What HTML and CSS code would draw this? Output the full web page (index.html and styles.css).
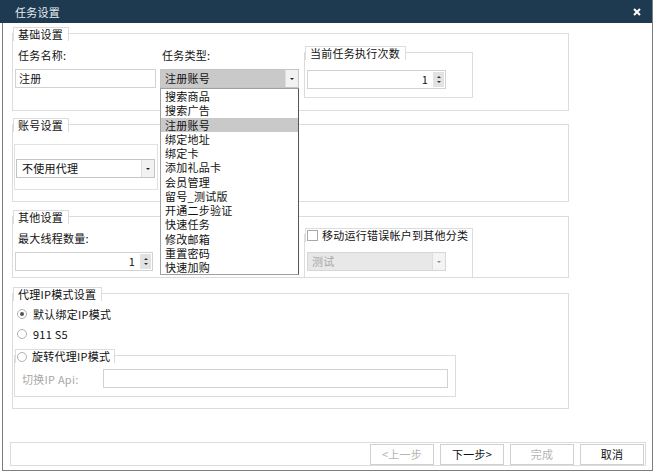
FILE: index.html
```html
<!DOCTYPE html>
<html lang="zh-CN">
<head>
    <meta charset="UTF-8">
    <title>任务设置</title>
    <link rel="stylesheet" href="styles.css">
</head>
<body>
    <div class="window">
        <div class="titlebar">
            <span class="title">任务设置</span>
            <svg class="close" width="8" height="8" viewBox="0 0 8 8"><path d="M1 1L7 7M7 1L1 7" stroke="#fff" stroke-width="2"/></svg>
        </div>

        <div class="content">
            <!-- 基础设置 -->
            <div class="group g-basic">
                <div class="group-title">基础设置</div>
                <div class="row">
                    <div class="field">
                        <div class="label">任务名称:</div>
                        <div class="textbox">注册</div>
                    </div>
                    <div class="field field-type">
                        <div class="label">任务类型:</div>
                        <div class="combo open">
                            <span class="combo-text">注册账号</span>
                            <span class="combo-btn"></span>
                            <ul class="droplist">
                                <li>搜索商品</li>
                                <li>搜索广告</li>
                                <li class="sel">注册账号</li>
                                <li>绑定地址</li>
                                <li>绑定卡</li>
                                <li>添加礼品卡</li>
                                <li>会员管理</li>
                                <li>留号_测试版</li>
                                <li>开通二步验证</li>
                                <li>快速任务</li>
                                <li>修改邮箱</li>
                                <li>重置密码</li>
                                <li>快速加购</li>
                            </ul>
                        </div>
                    </div>
                    <div class="sub sub-count">
                        <div class="group-title">当前任务执行次数</div>
                        <div class="numeric num-count">
                            <span class="num-val">1</span>
                            <span class="spin"><i class="up"></i><i class="down"></i></span>
                        </div>
                    </div>
                </div>
            </div>

            <!-- 账号设置 -->
            <div class="group g-account">
                <div class="group-title">账号设置</div>
                <div class="inner-box">
                    <div class="combo combo-proxy">
                        <span class="combo-text">不使用代理</span>
                        <span class="combo-btn"></span>
                    </div>
                </div>
            </div>

            <!-- 其他设置 -->
            <div class="group g-other">
                <div class="group-title">其他设置</div>
                <div class="row">
                    <div class="field field-threads">
                        <div class="label">最大线程数量:</div>
                        <div class="numeric">
                            <span class="num-val">1</span>
                            <span class="spin"><i class="up"></i><i class="down"></i></span>
                        </div>
                    </div>
                    <div class="sub sub-move">
                        <div class="group-title check-title"><span class="checkbox"></span>移动运行错误帐户到其他分类</div>
                        <div class="combo disabled">
                            <span class="combo-text">测试</span>
                            <span class="combo-btn"></span>
                        </div>
                    </div>
                </div>
            </div>

            <!-- 代理IP模式设置 -->
            <div class="group g-proxy">
                <div class="group-title">代理IP模式设置</div>
                <div class="radio-row"><span class="radio on"></span>默认绑定IP模式</div>
                <div class="radio-row"><span class="radio"></span>911 S5</div>
                <div class="sub sub-rotate">
                    <div class="group-title check-title"><span class="radio"></span>旋转代理IP模式</div>
                    <div class="api-row">
                        <span class="api-label">切换IP Api:</span>
                        <div class="textbox api-input"></div>
                    </div>
                </div>
            </div>

            <div class="footer">
                <button class="btn" disabled>&lt;上一步</button>
                <button class="btn">下一步&gt;</button>
                <button class="btn" disabled>完成</button>
                <button class="btn">取消</button>
            </div>
        </div>
    </div>
</body>
</html>
```

FILE: styles.css
```css
* {
    box-sizing: border-box;
}

body {
    margin: 0;
    background: #fff;
    font-family: "Noto Sans CJK SC", "Noto Sans", sans-serif;
    font-size: 11px;
    letter-spacing: 0.25px;
    color: #111;
}

.window {
    margin-left: 2px;
    width: 651px;
    height: 471px;
    border: 1px solid #7d7d7d;
    border-top: 0;
}

.titlebar {
    height: 23px;
    margin-left: -3px;
    background: #1d3a51;
    color: #e4ebf0;
    display: flex;
    align-items: center;
    justify-content: space-between;
    padding: 0 11px 0 15px;
}

.content {
    padding-left: 7px;
}

/* group boxes */
.group, .sub {
    border: 1px solid #dcdcdc;
}

.group {
    margin-left: 2px;
    width: 557px;
}

.group-title {
    width: max-content;
    margin-top: -7px;
    border: 1px solid #dcdcdc;
    border-bottom: 0;
    background: #fff;
    line-height: 13px;
    padding: 0 5px 0 4px;
}

.g-basic { margin-top: 10px; height: 78px; }
.g-account { margin-top: 13px; height: 78px; }
.g-other { margin-top: 14px; height: 62px; }
.g-proxy { margin-top: 15px; height: 116px; }

.row {
    display: flex;
    align-items: flex-start;
}

.field {
    margin-left: 2px;
    width: 141px;
}

.field-type {
    margin-left: 4px;
    width: 139px;
}

.field-threads {
    width: 138px;
}

.label {
    margin-top: 8px;
    line-height: 12px;
    padding-left: 3px;
}

.field-type .label {
    padding-left: 2px;
}

.textbox {
    margin-top: 8px;
    height: 19px;
    border: 1px solid #d2d2d2;
    line-height: 17px;
    padding-left: 3px;
    background: #fff;
}

/* combo boxes */
.combo {
    position: relative;
    display: flex;
    margin-top: 8px;
    height: 19px;
    border: 1px solid #c4c4c4;
    background: #fff;
}

.combo-text {
    flex: 1;
    padding-left: 4px;
    line-height: 17px;
}

.combo-btn {
    width: 13px;
    border-left: 1px solid #dedede;
    background: #f2f2f2;
    display: flex;
    align-items: center;
    justify-content: center;
}

.combo-btn::after {
    content: "";
    border-left: 2px solid transparent;
    border-right: 2px solid transparent;
    border-top: 2px solid #222;
}

.combo.open .combo-text {
    background: #c9c9c9;
}

.droplist {
    position: absolute;
    top: 18px;
    left: -1px;
    width: 139px;
    margin: 0;
    padding: 0;
    list-style: none;
    background: #fff;
    border: 1px solid #a0a0a0;
    border-right-color: #555;
    z-index: 5;
}

.droplist li {
    height: 14.25px;
    line-height: 14.25px;
    padding-left: 4px;
    white-space: nowrap;
}

.droplist li.sel {
    background: #c9c9c9;
}

.combo.disabled {
    margin: 10px 0 0 2px;
    width: 139px;
    background: #e8e8e8;
    border-color: #d6d6d6;
    color: #a8a8a8;
}

.combo.disabled .combo-btn {
    background: #f4f4f4;
}

.combo.disabled .combo-btn::after {
    border-top-color: #888;
}

/* numeric up-down */
.numeric {
    display: flex;
    margin-top: 8px;
    height: 19px;
    border: 1px solid #d2d2d2;
    background: #fff;
}

.num-val {
    flex: 1;
    text-align: right;
    padding-right: 5px;
    line-height: 17px;
}

.spin {
    width: 11px;
    margin: 1px 1px 1px 0;
    background: #e2e2e2;
    display: flex;
    flex-direction: column;
    align-items: center;
    justify-content: center;
    gap: 3px;
}

.spin i {
    border-left: 2px solid transparent;
    border-right: 2px solid transparent;
}

.spin .up { border-bottom: 2px solid #333; }
.spin .down { border-top: 2px solid #333; }

/* sub groups */
.sub-count {
    margin: 11px 0 0 5px;
    width: 169px;
    height: 46px;
}

.num-count {
    margin: 10px 0 0 2px;
    width: 139px;
}

.inner-box {
    margin: 12px 0 0 1px;
    width: 144px;
    height: 46px;
    border: 1px solid #e2e2e2;
}

.combo-proxy {
    margin: 14px 0 0 1px;
    width: 139px;
}

.combo-proxy .combo-text {
    padding-left: 5px;
}

.sub-move {
    margin: 10px 0 0 151px;
    width: 169px;
    height: 44px;
}

.check-title {
    display: flex;
    align-items: center;
    gap: 4px;
    padding: 0 4px 0 1px;
}

.checkbox {
    width: 11px;
    height: 11px;
    border: 1px solid #a8a8a8;
    background: #fff;
}

/* radios */
.radio-row {
    display: flex;
    align-items: center;
    gap: 6px;
    margin: 6px 0 0 4px;
    height: 14px;
    line-height: 14px;
}

.radio {
    width: 10px;
    height: 10px;
    border-radius: 50%;
    border: 1px solid #b0b0b0;
    background: #fff;
    display: flex;
    align-items: center;
    justify-content: center;
}

.radio.on::after {
    content: "";
    width: 4px;
    height: 4px;
    border-radius: 50%;
    background: #555;
}

.sub-rotate {
    margin: 14px 0 0 1px;
    width: 442px;
    height: 42px;
}

.sub-rotate .check-title {
    gap: 5px;
}

.api-row {
    display: flex;
    align-items: center;
    margin-top: 6px;
}

.api-label {
    width: 88px;
    padding-left: 7px;
    color: #a8a8a8;
}

.api-input {
    margin-top: 0;
    width: 345px;
}

/* bottom buttons */
.footer {
    margin-top: 33px;
    width: 636px;
    height: 24px;
    border: 1px solid #dcdcdc;
    display: flex;
    justify-content: flex-end;
    align-items: center;
    gap: 6px;
    padding-right: 1px;
}

.btn {
    width: 64px;
    height: 21px;
    padding: 0;
    border: 1px solid #d0d0d0;
    background: #fff;
    font: inherit;
    letter-spacing: inherit;
    color: #111;
}

.btn:disabled {
    color: #b4b4b4;
}
```
